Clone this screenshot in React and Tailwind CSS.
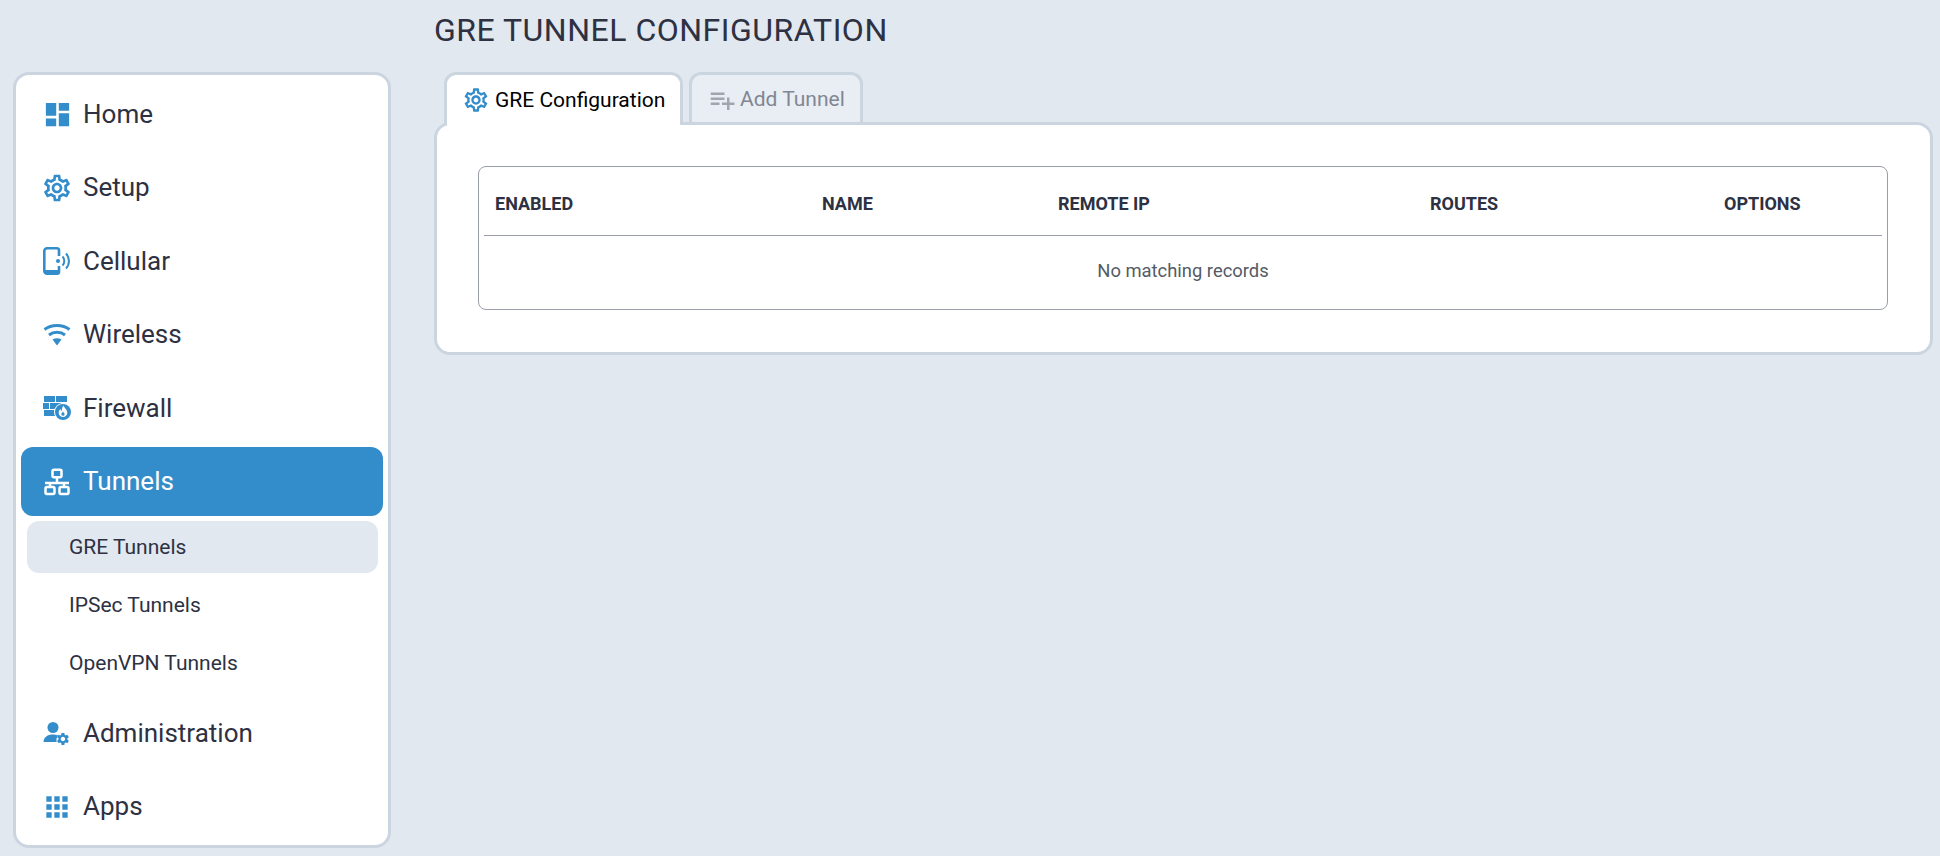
import React from 'react';
import { MdDashboard, MdOutlineSettings, MdApps, MdPlaylistAdd } from 'react-icons/md';

const CellularIcon = ({ className }) => (
  <svg className={className} viewBox="0 0 28 28" fill="none">
    <path d="M16 9V3.500A2 2 0 0 0 14 1.300H4A2.700 2.700 0 0 0 1.300 4v20A2.700 2.700 0 0 0 4 26.700h10a2 2 0 0 0 2-2V19" stroke="currentColor" strokeWidth="2.600" />
    <rect x="2" y="23" width="14" height="3" fill="currentColor" />
    <circle cx="15" cy="14" r="2" fill="currentColor" />
    <path d="M19.500 9.500a6.500 6.500 0 0 1 0 9" stroke="currentColor" strokeWidth="2" />
    <path d="M23 6.500a11 11 0 0 1 0 15" stroke="currentColor" strokeWidth="2" />
  </svg>
);

const FirewallIcon = ({ className }) => (
  <svg className={className} viewBox="0 0 28 28">
    <g fill="currentColor">
      <rect x="1" y="2" width="11" height="6" />
      <rect x="13" y="2" width="11" height="6" />
      <rect x="0" y="9" width="6" height="6" />
      <rect x="7" y="9" width="11" height="6" />
      <rect x="1" y="16" width="11" height="6" />
    </g>
    <circle cx="20" cy="18" r="9" fill="#fff" />
    <circle cx="20" cy="18" r="8" fill="currentColor" />
    <path d="M20.500 11.500c.5 2.300 3.800 3.800 3.800 7.300a4.300 4.300 0 0 1-8.600 0c0-1.700.8-3 1.800-3.800.1 1 .5 1.700 1.200 2 .4-1.900.2-3.600 1.800-5.500z" fill="#fff" />
    <path d="M20 17.500c.3 1 1.600 1.500 1.600 2.700a1.600 1.600 0 0 1-3.200 0c0-1.100 1-1.600 1.600-2.700z" fill="currentColor" />
  </svg>
);

const AdminIcon = ({ className }) => (
  <svg className={className} viewBox="0 0 28 28" fill="currentColor">
    <circle cx="10" cy="8.500" r="5.500" />
    <path d="M0.500 23c.3-5 4-7.500 9.500-7.500 2 0 3.700.3 5.200 1-1.500 1.500-2.200 4-1.500 6.500z" />
    <g transform="translate(12.500 12.500) scale(0.62)">
      <path d="M19.140 12.940c.04-.3.06-.61.06-.94 0-.32-.02-.64-.07-.94l2.030-1.580c.18-.14.23-.41.12-.61l-1.920-3.320c-.12-.22-.37-.29-.59-.22l-2.390.96c-.5-.38-1.030-.7-1.620-.94l-.36-2.540c-.04-.24-.24-.41-.48-.41h-3.840c-.24 0-.43.17-.47.41l-.36 2.540c-.59.24-1.130.57-1.620.94l-2.390-.96c-.22-.08-.47 0-.59.22L2.740 8.870c-.12.21-.08.47.12.61l2.030 1.580c-.05.3-.09.63-.09.94s.02.64.07.94l-2.030 1.580c-.18.14-.23.41-.12.61l1.920 3.320c.12.22.37.29.59.22l2.390-.96c.5.38 1.030.7 1.620.94l.36 2.540c.05.24.24.41.48.41h3.840c.24 0 .44-.17.47-.41l.36-2.540c.59-.24 1.130-.56 1.620-.94l2.390.96c.22.08.47 0 .59-.22l1.920-3.320c.12-.22.07-.47-.12-.61l-2.010-1.580zM12 15.600c-1.980 0-3.600-1.620-3.600-3.600s1.620-3.600 3.600-3.600 3.600 1.620 3.600 3.600-1.620 3.600-3.600 3.600z" />
    </g>
  </svg>
);

const TunnelIcon = ({ className }) => (
  <svg className={className} viewBox="0 0 28 28" fill="none" stroke="currentColor" strokeWidth="2.500" strokeLinejoin="round">
    <rect x="9.500" y="1.800" width="9" height="7.500" rx="1.500" />
    <path d="M14 9.500V15M2 15h24M7 15v4M21 15v4" />
    <rect x="2.500" y="19" width="9" height="7" rx="1.500" />
    <rect x="16.500" y="19" width="9" height="7" rx="1.500" />
  </svg>
);

const WifiIcon = ({ className }) => (
  <svg className={className} viewBox="0 0 28 28" fill="none" stroke="currentColor" strokeWidth="3">
    <path d="M1.500 8.500c7-5.400 18-5.400 25 0" />
    <path d="M6 14c4.500-3.600 11.500-3.600 16 0" />
    <path d="M9.500 18.500c2.600-1.700 6.400-1.700 9 0L14 24.500z" fill="currentColor" stroke="none" />
  </svg>
);

const menu = [
  { label: 'Home', Icon: MdDashboard, size: 'w-[31px] h-[31px]' },
  { label: 'Setup', Icon: MdOutlineSettings, size: 'w-[32px] h-[32px]' },
  { label: 'Cellular', Icon: CellularIcon, size: 'w-[28px] h-[28px]' },
  { label: 'Wireless', Icon: WifiIcon, size: 'w-[28px] h-[28px]' },
  { label: 'Firewall', Icon: FirewallIcon, size: 'w-[28px] h-[28px]' },
  { label: 'Tunnels', Icon: TunnelIcon, size: 'w-[28px] h-[28px]', active: true },
];

const subMenu = ['GRE Tunnels', 'IPSec Tunnels', 'OpenVPN Tunnels'];

const MenuRow = ({ label, Icon, size, active }) => (
  <a
    className={
      active
        ? 'flex items-center h-[69px] pl-[22px] rounded-xl bg-[#348dcb] text-white text-[26px]'
        : 'flex items-center h-[69px] pl-[22px] rounded-xl text-[#2d3142] text-[26px]'
    }
  >
    <span className="w-[28px] h-[28px] flex items-center justify-center mr-[12px]">
      <Icon className={active ? `${size} shrink-0 text-white` : `${size} shrink-0 text-[#348dcb]`} />
    </span>
    {label}
  </a>
);

export default function App() {
  return (
    <div className="min-h-screen bg-[#e2e8f0] flex pl-[13px] pr-[7px] font-['Roboto',sans-serif]">
      {/* Sidebar */}
      <aside className="w-[378px] h-[776px] mt-[72px] shrink-0 bg-white border-[3px] border-[#cbd5e0] rounded-2xl px-[5px] pt-[4.5px] flex flex-col gap-[4.5px]">
        {menu.map((item) => (
          <MenuRow key={item.label} {...item} />
        ))}
        <div className="flex flex-col gap-[6px] pl-[6px] pr-[5px] mt-[0.5px] mb-[5px]">
          {subMenu.map((label, i) => (
            <a
              key={label}
              className={
                i === 0
                  ? 'flex items-center h-[52px] pl-[42px] pt-[2px] rounded-xl bg-[#e2e8f0] text-[#2d3142] text-[21px]'
                  : 'flex items-center h-[52px] pl-[42px] pt-[2px] rounded-xl text-[#2d3142] text-[21px]'
              }
            >
              {label}
            </a>
          ))}
        </div>
        <MenuRow label="Administration" Icon={AdminIcon} size="w-[28px] h-[28px]" />
        <MenuRow label="Apps" Icon={MdApps} size="w-[32px] h-[32px]" />
      </aside>

      {/* Main */}
      <main className="flex-1 ml-[43px]">
        <h1 className="h-[60px] mb-[12px] flex items-center text-[32px] tracking-[0.5px] text-[#2d3142]">GRE TUNNEL CONFIGURATION</h1>

        <div className="flex gap-[6px] ml-[10px] relative z-10">
          <div className="h-[53px] -mb-[3px] w-[239px] flex items-center pl-[15px] bg-white border-[3px] border-b-0 border-[#cbd5e0] rounded-t-xl text-[21px] text-black">
            <MdOutlineSettings className="w-[28px] h-[28px] mr-[5px] text-[#348dcb]" />
            <span className="pt-[1px]">GRE Configuration</span>
          </div>
          <div className="h-[50px] w-[174px] flex items-center pl-[15px] bg-[#e9edf4] border-[3px] border-b-0 border-[#cbd5e0] rounded-t-xl text-[21px] text-[#808792]">
            <MdPlaylistAdd className="w-[30px] h-[30px] mr-[3px] mt-[2px] text-[#a0a6b0]" />
            <span className="pt-[3px]">Add Tunnel</span>
          </div>
        </div>

        <section className="bg-white border-[3px] border-[#cbd5e0] rounded-2xl pl-[41px] pr-[42px] pt-[41px] pb-[42px]">
          <div className="border border-[#9a9ea8] rounded-lg px-[5px] pb-[5px]">
            <table className="w-full table-fixed border-collapse">
              <thead>
                <tr className="border-b border-[#9a9ea8] h-[68px] text-[#2d3142] text-[18px] font-bold text-left">
                  <th className="w-[327px] pl-[11px] pt-[5px] font-bold">ENABLED</th>
                  <th className="w-[236px] pl-[11px] pt-[5px] font-bold">NAME</th>
                  <th className="w-[372px] pl-[11px] pt-[5px] font-bold">REMOTE IP</th>
                  <th className="w-[294px] pl-[11px] pt-[5px] font-bold">ROUTES</th>
                  <th className="pl-[11px] pt-[5px] font-bold">OPTIONS</th>
                </tr>
              </thead>
              <tbody>
                <tr>
                  <td colSpan={5} className="h-[69px] pt-[2px] text-center text-[18.400px] text-[#555b66]">
                    No matching records
                  </td>
                </tr>
              </tbody>
            </table>
          </div>
        </section>
      </main>
    </div>
  );
}
